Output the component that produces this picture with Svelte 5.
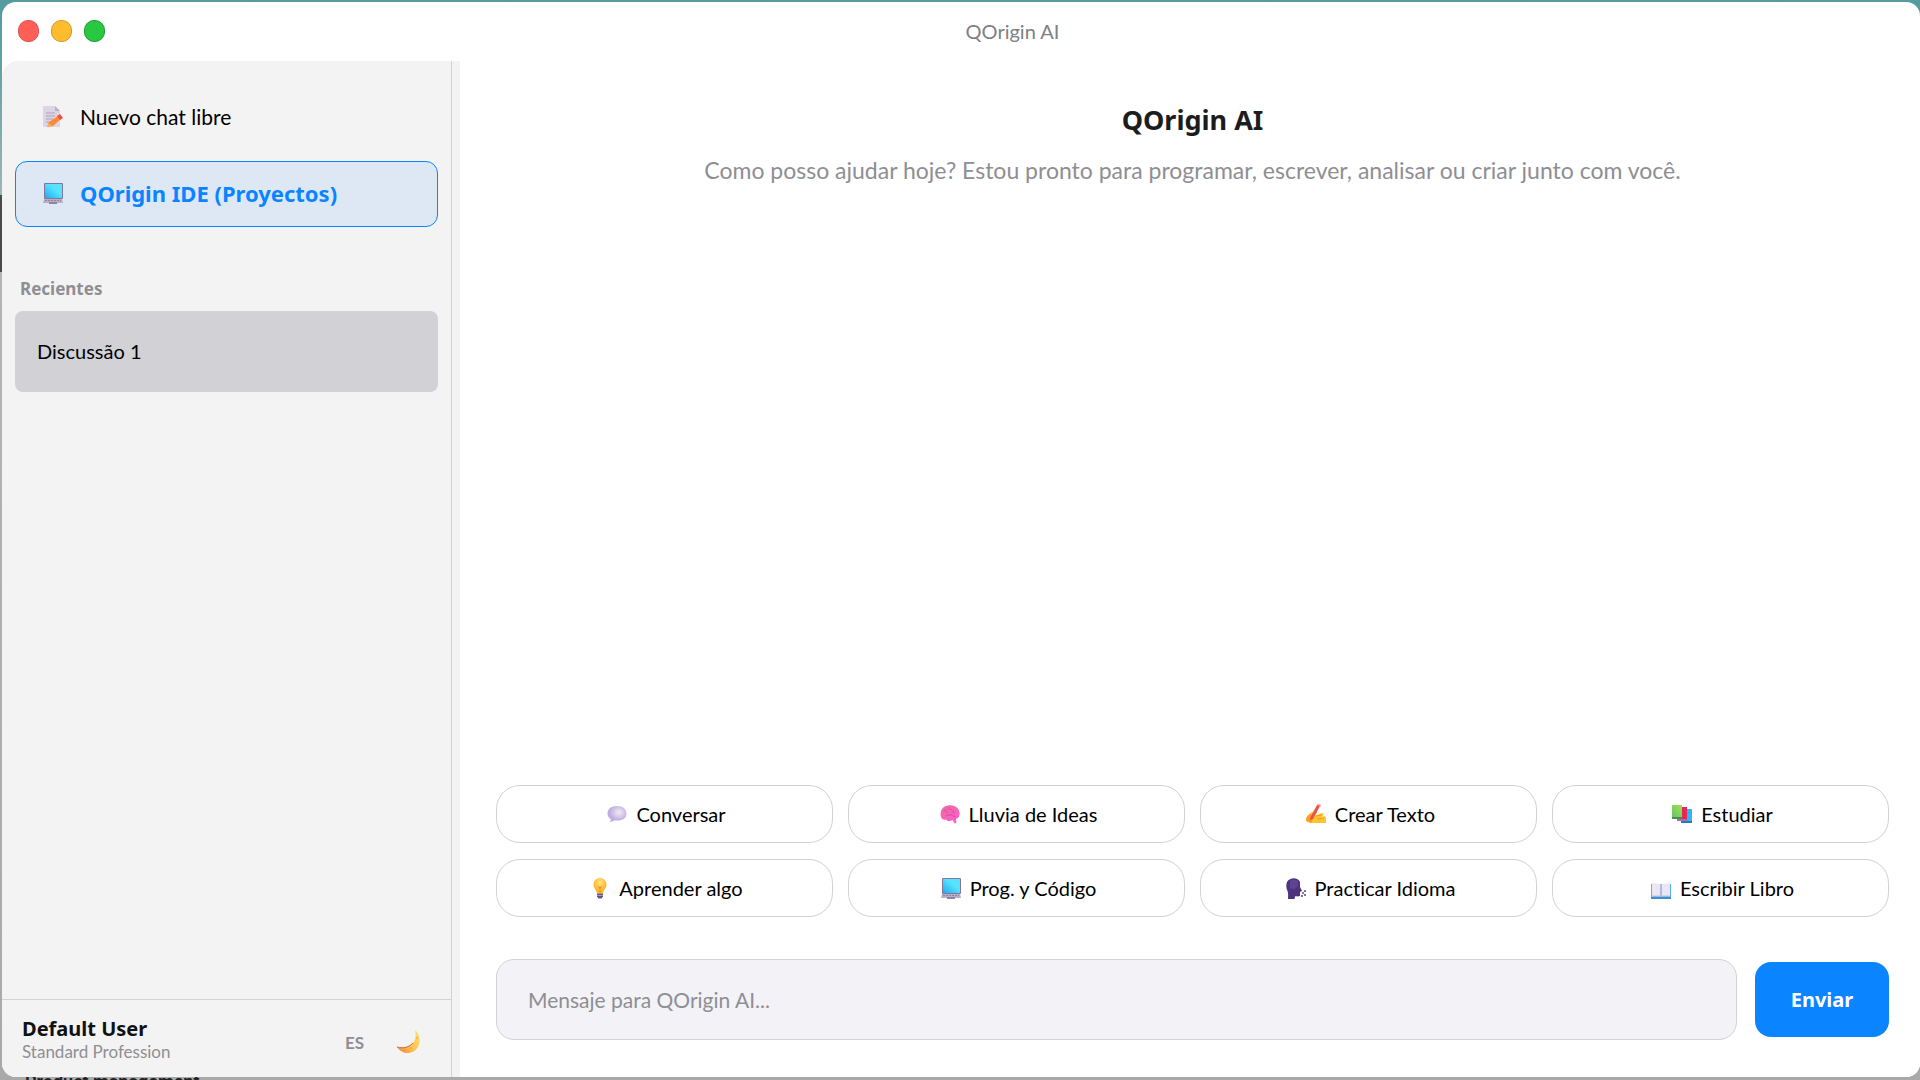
<script>
	let dark = $state(false);
	let message = $state('');
	let recents = ['Discussão 1'];
	let chips = [
		{ icon: 'bubble', label: 'Conversar' },
		{ icon: 'brain', label: 'Lluvia de Ideas' },
		{ icon: 'hand', label: 'Crear Texto' },
		{ icon: 'books', label: 'Estudiar' },
		{ icon: 'bulb', label: 'Aprender algo' },
		{ icon: 'laptop', label: 'Prog. y Código' },
		{ icon: 'head', label: 'Practicar Idioma' },
		{ icon: 'book', label: 'Escribir Libro' }
	];
</script>

<svelte:head>
	<title>QOrigin AI</title>
</svelte:head>

{#snippet icon(name)}
	<svg class="icon" viewBox="0 0 20 22" aria-hidden="true">
		{#if name === 'memo'}
			<path d="M0 1h12l5 5v16H0z" fill="#ddd5e5" />
			<path d="M12 1l5 5h-5z" fill="#b9b0c4" />
			<path d="M3 8h9M3 11h9M3 14h7M3 17h4" stroke="#aaa1b8" stroke-width="1" />
			<path d="M4 22l2-5 9-6 3 3-8 7z" fill="#ff8a35" />
			<path d="M14 11l3-2 3 4-3 2z" fill="#f4503f" />
			<path d="M4 22l2-4 3 3z" fill="#ffb057" />
		{:else if name === 'laptop'}
			<rect x="1" y="1" width="19" height="16" rx="1" fill="#8374a0" />
			<rect x="2" y="2" width="17" height="14" fill="url(#screen)" />
			<path d="M1 17h18l1 4H0z" fill="#b8afc4" />
			<path d="M2 18.500h16" stroke="#8e849f" stroke-width="1" stroke-dasharray="2 1" />
			<path d="M6 20h8v2H6z" fill="#8e849f" />
		{:else if name === 'bubble'}
			<path
				d="M10 3c6 0 9.500 3 9.500 7.500S16 17.500 10 17.500c-1 0-1.500 0-2.500-.2C6 18.500 4.500 19 2.500 19c1-1 1.500-2 1.300-3C1.500 14.700.5 13 .5 10.500.5 6 4 3 10 3z"
				fill="url(#cloud)"
			/>
		{:else if name === 'brain'}
			<path
				d="M1 14C-.5 9 2 3 8 2.500c6-1 11 2 11.500 7 .3 3-.5 5.500-3.500 6.500l.5 4-2 .5-2-3.500c-2 1.500-5 1.500-6.500-.500-2.500.5-4.500-.500-5-2.500z"
				fill="url(#pink)"
			/>
			<path
				d="M4 7c2 0 3 1 3 3M9 4c-1 2 1 3 3 2.500M14 7c-2 1-1 3 1 3.500M6 13c2-2 4 0 6-1.500M12 12c1 2 3 1 4 1.500"
				fill="none"
				stroke="#d94aa0"
				stroke-width="1"
			/>
		{:else if name === 'hand'}
			<path d="M0 18c0-5 3-7 6-9l4-1 1 2-3 3 8-3 2 1-2 3 3-1 1 2v5H4z" fill="#ffc531" />
			<path d="M0 18c0-4 2-6 4-7l3 1-1 8z" fill="#ff9d2c" />
			<path d="M10 13l6-1M11 16l7-1" stroke="#f29a1f" stroke-width="1" />
			<path d="M4 15l7-13 3 1-7 13-3 1z" fill="#ef5144" />
			<path d="M11 2l1-1 3 1-1 2z" fill="#ff8178" />
		{:else if name === 'books'}
			<path d="M9 6h11v14H9z" fill="#2fb4f5" />
			<path d="M9 18h11v2H9z" fill="#1d7fc8" />
			<path d="M5 4h10v13H5z" fill="#e5265a" />
			<path d="M5 16h10v2H5z" fill="#b06a9d" />
			<path d="M0 2h10v13H0z" fill="url(#green)" />
			<path d="M0 14h10v2H0z" fill="#4a8b5c" />
		{:else if name === 'bulb'}
			<path
				d="M10 1c4 0 6.500 3 6.500 6.500 0 4-3 5-3.500 9H7c-.5-4-3.500-5-3.500-9C3.500 4 6 1 10 1z"
				fill="url(#bulb)"
			/>
			<path d="M8 9l2 2 2-2M10 11v5" fill="none" stroke="#f28a1c" stroke-width="1" />
			<path d="M7 16.500h6v3l-1.500 2h-3L7 19.500z" fill="#665282" />
			<path d="M7 18.500h6" stroke="#a99bc0" stroke-width="1" />
		{:else if name === 'head'}
			<path
				d="M1 5c3-5 11-5 13 0v5l2 4-2 1v4c-2 1-4 0-5 .5l-.5 2.500H2c0-3 .5-5-.5-8C0 11 0 7.500 1 5z"
				fill="#4d347c"
			/>
			<path d="M4 4c2-2 6-2 8 0v5c-2 3-5 4-8 2z" fill="#5e4390" />
			<g fill="#5b4387">
				<circle cx="17" cy="16" r="1" />
				<circle cx="19" cy="14" r="1" />
				<circle cx="19" cy="18" r="1" />
				<circle cx="16" cy="19" r="1" />
			</g>
		{:else if name === 'book'}
			<path d="M0 7h20v15H0z" fill="#58b5f0" />
			<path d="M0 20h20v2H0z" fill="#3f8ed0" />
			<path d="M1 6l8.500 1v12L1 19zM10.500 7L19 6v13h-8.500z" fill="#ece6f4" />
			<path d="M10 7v13" stroke="#b7adca" stroke-width="1" />
			<path d="M1 19h18" stroke="#c9bfd8" stroke-width="1" />
		{/if}
	</svg>
{/snippet}

<svg class="defs" aria-hidden="true">
	<defs>
		<linearGradient id="screen" x1="0" y1="1" x2="1" y2="0">
			<stop offset="0" stop-color="#23a9ee" />
			<stop offset="0.6" stop-color="#55e4ff" />
		</linearGradient>
		<radialGradient id="cloud" cx="0.6" cy="0.4">
			<stop offset="0" stop-color="#f0ebf5" />
			<stop offset="1" stop-color="#c0acdf" />
		</radialGradient>
		<linearGradient id="pink" x1="0" y1="0" x2="1" y2="1">
			<stop offset="0" stop-color="#ee6a9f" />
			<stop offset="1" stop-color="#ff5fd2" />
		</linearGradient>
		<linearGradient id="green" x1="1" y1="0" x2="0" y2="1">
			<stop offset="0" stop-color="#a5df4e" />
			<stop offset="1" stop-color="#62c46c" />
		</linearGradient>
		<radialGradient id="bulb" cx="0.5" cy="0.3">
			<stop offset="0" stop-color="#ffe57a" />
			<stop offset="1" stop-color="#ffb52e" />
		</radialGradient>
		<linearGradient id="moon" x1="1" y1="0" x2="0" y2="1">
			<stop offset="0" stop-color="#ffe07a" />
			<stop offset="0.6" stop-color="#ffc04d" />
			<stop offset="1" stop-color="#f47f3a" />
		</linearGradient>
	</defs>
</svg>

<div class="desktop">
	<div class="behind" aria-hidden="true">Product management</div>
	<div class="window">
		<header class="titlebar">
			<div class="lights">
				<button class="light red" aria-label="Cerrar"></button>
				<button class="light yellow" aria-label="Minimizar"></button>
				<button class="light green" aria-label="Maximizar"></button>
			</div>
			<span class="title">QOrigin AI</span>
		</header>

		<div class="content">
			<aside class="sidebar">
				<nav>
					<button class="nav-item">{@render icon('memo')}Nuevo chat libre</button>
					<button class="nav-item active">{@render icon('laptop')}QOrigin IDE (Proyectos)</button>
				</nav>
				<h2>Recientes</h2>
				{#each recents as recent}
					<button class="recent">{recent}</button>
				{/each}
				<footer>
					<div class="user">
						<strong>Default User</strong>
						<span>Standard Profession</span>
					</div>
					<button class="lang">ES</button>
					<button class="theme" aria-label="Tema" onclick={() => (dark = !dark)}>
						<svg viewBox="0 0 24 24">
							<path
								d="M18 0c5 4 6 11 3 17-4 7-15 9-21 0 7 2 12 0 16-4 3-4 3-8 2-13z"
								fill="url(#moon)"
							/>
							<path d="M0 17c7 2 12 0 16-4" fill="none" stroke="#c46a4a" stroke-width="1" />
							<circle cx="8" cy="20" r="1" fill="#e99a35" />
							<circle cx="14" cy="18" r="1" fill="#e9a53f" />
							<circle cx="20" cy="8" r="1" fill="#f0b34a" />
						</svg>
					</button>
				</footer>
			</aside>

			<main>
				<h1>QOrigin AI</h1>
				<p class="intro">
					Como posso ajudar hoje? Estou pronto para programar, escrever, analisar ou criar junto com
					você.
				</p>
				<div class="chips">
					{#each chips as chip}
						<button class="chip">{@render icon(chip.icon)}{chip.label}</button>
					{/each}
				</div>
				<form class="composer" onsubmit={(e) => e.preventDefault()}>
					<input
						bind:value={message}
						type="text"
						aria-label="Mensaje"
						placeholder="Mensaje para QOrigin AI..."
					/>
					<button class="send">Enviar</button>
				</form>
			</main>
		</div>
	</div>
</div>

<style>
	:global(body) {
		margin: 0;
	}
	.defs {
		position: absolute;
		width: 0;
		height: 0;
	}
	.desktop {
		position: relative;
		box-sizing: border-box;
		display: flex;
		height: 100vh;
		padding: 2px 0 3px 2px;
		overflow: hidden;
		font-family: Lato, 'Noto Sans', sans-serif;
		font-variant-ligatures: none;
		background: linear-gradient(
			#559b9f 0,
			#62a0a3 60px,
			#9db5b6 195px,
			#4a4a4a 195px,
			#4a4a4a 272px,
			#b4b4b4 272px,
			#a9a9a9 100%
		);
	}
	.behind {
		position: absolute;
		left: 25px;
		bottom: -14px;
		font-family: Roboto, sans-serif;
		font-size: 18px;
		line-height: 24px;
		font-weight: 600;
		color: #222;
	}
	.window {
		position: relative;
		flex: 1;
		display: flex;
		flex-direction: column;
		border-radius: 14px;
		overflow: hidden;
		background: #fff;
	}
	button,
	input {
		box-sizing: border-box;
		font-family: inherit;
		margin: 0;
	}
	button {
		cursor: pointer;
		font-variant-ligatures: none;
	}
	.titlebar {
		box-sizing: border-box;
		display: flex;
		align-items: center;
		height: 59px;
		padding: 0 0 2px 16px;
	}
	.lights {
		display: flex;
		gap: 12px;
		width: 87px;
	}
	.light {
		width: 21px;
		height: 22px;
		padding: 0;
		border: 1px solid;
		border-radius: 10px;
	}
	.red {
		background: #ff5f57;
		border-color: #d9544e;
	}
	.yellow {
		background: #ffbd2e;
		border-color: #cf9a2c;
	}
	.green {
		background: #28c840;
		border-color: #1f9c33;
	}
	.title {
		flex: 1;
		text-align: center;
		font-size: 20px;
		color: #808085;
	}
	.content {
		flex: 1;
		display: flex;
		min-height: 0;
		background: #f3f3f3;
		border-top-left-radius: 16px;
	}
	.sidebar {
		box-sizing: border-box;
		display: flex;
		flex-direction: column;
		width: 450px;
		padding: 23px 13px 0;
		border-right: 1px solid #d1d1d6;
	}
	nav {
		display: flex;
		flex-direction: column;
		gap: 11px;
	}
	.icon {
		flex: none;
		width: 20px;
		height: 22px;
	}
	.nav-item {
		display: flex;
		align-items: center;
		gap: 17px;
		height: 66px;
		padding: 0 27px 2px;
		border: 1px solid transparent;
		border-radius: 12px;
		background: none;
		font-size: 21px;
		color: #000;
	}
	.active {
		border-color: #0a84ff;
		background: #dde8f4;
		font-family: 'Noto Sans', sans-serif;
		font-size: 22px;
		font-weight: 700;
		color: #0a84ff;
	}
	h2 {
		margin: 50px 0 10px 5px;
		font-family: 'Noto Sans', sans-serif;
		font-size: 17px;
		line-height: 24px;
		font-weight: 700;
		color: #8e8e93;
	}
	.recent {
		height: 81px;
		padding: 0 22px 2px;
		border: 0;
		border-radius: 8px;
		background: #d1d1d6;
		font-size: 20px;
		text-align: left;
		color: #000;
	}
	footer {
		box-sizing: border-box;
		display: flex;
		align-items: center;
		height: 78px;
		margin: auto -13px 0;
		padding: 3px 30px 0 20px;
		border-top: 1px solid #d1d1d6;
	}
	.user {
		flex: 1;
		display: flex;
		flex-direction: column;
	}
	.user strong {
		font-family: 'Noto Sans', sans-serif;
		font-size: 20px;
		line-height: 24px;
		color: #111;
	}
	.user span {
		font-size: 17px;
		line-height: 22px;
		color: #8e8e93;
	}
	.lang,
	.theme {
		padding: 4px 0 0;
		border: 0;
		background: none;
		font-size: 17px;
		color: #8e8e93;
	}
	.lang {
		margin-right: 33px;
		font-weight: 700;
	}
	.theme svg {
		display: block;
		width: 24px;
		height: 24px;
	}
	main {
		flex: 1;
		display: flex;
		flex-direction: column;
		margin-left: 8px;
		padding: 39px 31px 37px 36px;
		background: #fff;
	}
	h1 {
		margin: 0;
		font-family: 'Noto Sans', sans-serif;
		font-size: 27px;
		line-height: 40px;
		font-weight: 700;
		text-align: center;
		color: #1c1c1e;
	}
	.intro {
		margin: 14px 0 0;
		font-size: 23px;
		line-height: 32px;
		text-align: center;
		color: #8e8e93;
	}
	.chips {
		display: grid;
		grid-template-columns: repeat(4, 1fr);
		gap: 16px 15px;
		margin-top: auto;
	}
	.chip {
		display: flex;
		align-items: center;
		justify-content: center;
		gap: 9px;
		height: 58px;
		padding: 0 16px 0 20px;
		border: 1px solid #d1d1d6;
		border-radius: 24px;
		background: #fff;
		font-size: 20px;
		color: #000;
	}
	.composer {
		display: flex;
		align-items: center;
		gap: 18px;
		margin-top: 42px;
	}
	.composer input {
		flex: 1;
		height: 81px;
		padding: 0 31px;
		border: 1px solid #d1d1d6;
		border-radius: 18px;
		background: #f2f2f7;
		font-size: 21px;
	}
	.composer input::placeholder {
		color: #8e8e93;
		opacity: 1;
	}
	.send {
		width: 134px;
		height: 75px;
		border: 0;
		border-radius: 16px;
		background: #0a84ff;
		font-family: 'Noto Sans', sans-serif;
		font-size: 20px;
		font-weight: 700;
		color: #fff;
	}
</style>
